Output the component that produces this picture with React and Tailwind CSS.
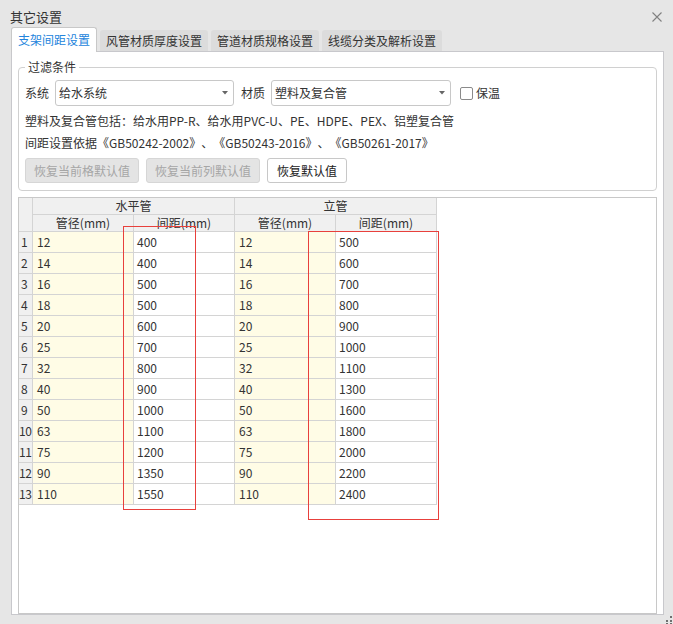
import React from 'react'

const rows = [
  [12, 400, 12, 500],
  [14, 400, 14, 600],
  [16, 500, 16, 700],
  [18, 500, 18, 800],
  [20, 600, 20, 900],
  [25, 700, 25, 1000],
  [32, 800, 32, 1100],
  [40, 900, 40, 1300],
  [50, 1000, 50, 1600],
  [63, 1100, 63, 1800],
  [75, 1200, 75, 2000],
  [90, 1350, 90, 2200],
  [110, 1550, 110, 2400]
];

const cell = "border-r border-b border-[#d4d4d4]";

function Select({ value, width }) {
  return (
    <div
      className={"h-[26px] border border-[#c8c8c8] rounded-[3px] bg-white flex items-center justify-between pl-[3px] pr-[5px] " + width}>
      <span>{value}</span>
      <svg width="6" height="4" viewBox="0 0 6 4">
        <path d="M0 0 L6 0 L3 3.5 Z" fill="#666"></path>
      </svg>
    </div>);
}

function Tab({ label, active }) {
  if (active) {
    return (
      <div
        className="h-[25px] -mb-px relative z-10 px-[6px] flex items-center bg-white border border-b-0 border-[#c8c8c8] rounded-t-[3px] text-[#2384dc]">
        {label}
      </div>);
  }
  return (
    <div className="h-[21px] px-[6px] flex items-center bg-[#dcdcdc] rounded-t-[3px] text-[#333]">
      {label}
    </div>);
}

export default function App() {
  return (
    <div
      className="relative w-[673px] h-[624px] bg-[#e6e6e6] text-[12px] leading-[16px] text-[#333] overflow-hidden [text-spacing-trim:space-all]"
      style={{ fontFamily: '"Noto Sans CJK SC", "Noto Sans", sans-serif' }}>
      <div className="h-[27px] pt-[6px] pl-[10px] pr-[11px] flex items-center justify-between">
        <span className="text-[13px]">其它设置</span>
        <svg width="10" height="10" viewBox="0 0 10 10">
          <path d="M0.5 0.5 L9.5 9.5 M9.5 0.5 L0.5 9.5" stroke="#808080" strokeWidth="1.1"></path>
        </svg>
      </div>
      <div className="h-[24px] ml-[11px] flex items-end gap-[3px]">
        <Tab label="支架间距设置" active={true}></Tab>
        <Tab label="风管材质厚度设置"></Tab>
        <Tab label="管道材质规格设置"></Tab>
        <Tab label="线缆分类及解析设置"></Tab>
      </div>
      <div
        className="ml-[11px] w-[653px] h-[564px] bg-white border border-[#c8c8cc] px-[6px] pt-[7px] flex flex-col">
        <fieldset className="border border-[#d0d0d0] rounded-[4px] px-[6px] pb-[7px]">
          <legend className="px-[3px] leading-[16px]">过滤条件</legend>
          <div className="mt-[5px] h-[26px] flex items-center">
            <span className="mr-[6px]">系统</span>
            <Select value="给水系统" width="w-[179px]"></Select>
            <span className="ml-[7px] mr-[6px]">材质</span>
            <Select value="塑料及复合管" width="w-[180px]"></Select>
            <div className="ml-[9px] w-[13px] h-[13px] border border-[#8a8a8a] rounded-[2px] bg-white"></div>
            <span className="ml-[3px]">保温</span>
          </div>
          <div className="mt-[4px] h-[22px] flex items-center">
            塑料及复合管包括：给水用PP-R、给水用PVC-U、PE、HDPE、PEX、铝塑复合管
          </div>
          <div className="h-[22px] flex items-center">
            间距设置依据《GB50242-2002》、《GB50243-2016》、《GB50261-2017》
          </div>
          <div className="mt-[4px] flex gap-[7px]">
            <div
              className="h-[25px] w-[114px] flex items-center justify-center rounded-[3px] bg-[#e4e4e4] border border-[#d6d6d6] text-[#a6a6a6]">
              恢复当前格默认值
            </div>
            <div
              className="h-[25px] w-[114px] flex items-center justify-center rounded-[3px] bg-[#e4e4e4] border border-[#d6d6d6] text-[#a6a6a6]">
              恢复当前列默认值
            </div>
            <div
              className="h-[25px] w-[80px] flex items-center justify-center rounded-[3px] bg-white border border-[#c8c8c8] text-[#222]">
              恢复默认值
            </div>
          </div>
        </fieldset>
        <div className="relative mt-[6px] flex-1 border border-[#c8c8c8]">
          <div className="grid grid-cols-[14px_101px_101px_101px_101px] w-max">
            <div className={"row-span-2 bg-[#f0f0f0] " + cell}></div>
            <div className={"col-span-2 h-[17px] bg-[#f0f0f0] flex items-center justify-center " + cell}>水平管</div>
            <div className={"col-span-2 h-[17px] bg-[#f0f0f0] flex items-center justify-center " + cell}>立管</div>
            <div className={"h-[17px] bg-[#f0f0f0] flex items-center justify-center " + cell}>管径(mm)</div>
            <div className={"h-[17px] bg-[#f0f0f0] flex items-center justify-center " + cell}>间距(mm)</div>
            <div className={"h-[17px] bg-[#f0f0f0] flex items-center justify-center " + cell}>管径(mm)</div>
            <div className={"h-[17px] bg-[#f0f0f0] flex items-center justify-center " + cell}>间距(mm)</div>
            {rows.map(function (r, i) {
              return (
                <React.Fragment key={i}>
                  <div
                    className={"h-[21px] bg-[#f0f0f0] flex items-center overflow-hidden whitespace-nowrap " + (i < 9 ? "pl-[2px] " : "pl-0 tracking-[-0.5px] ") + cell}>
                    {i + 1}
                  </div>
                  <div className={"h-[21px] bg-[#fffce6] flex items-center pl-[4px] " + cell}>{r[0]}</div>
                  <div className={"h-[21px] bg-white flex items-center pl-[3px] " + cell}>{r[1]}</div>
                  <div className={"h-[21px] bg-[#fffce6] flex items-center pl-[4px] " + cell}>{r[2]}</div>
                  <div className={"h-[21px] bg-white flex items-center pl-[3px] " + cell}>{r[3]}</div>
                </React.Fragment>);
            })}
          </div>
          <div className="absolute left-[104px] top-[28px] w-[73px] h-[284px] border border-[#e8403c]"></div>
          <div className="absolute left-[289px] top-[33px] w-[131px] h-[289px] border border-[#e8403c]"></div>
        </div>
      </div>
      <svg className="absolute right-0 bottom-0" width="9" height="9" viewBox="0 0 9 9">
        <rect x="6" y="1" width="2" height="2" fill="#707070"></rect>
        <rect x="2" y="5" width="2" height="2" fill="#707070"></rect>
        <rect x="6" y="5" width="2" height="2" fill="#707070"></rect>
        <rect x="2" y="8" width="2" height="1" fill="#707070"></rect>
        <rect x="6" y="8" width="2" height="1" fill="#707070"></rect>
      </svg>
    </div>);
}
